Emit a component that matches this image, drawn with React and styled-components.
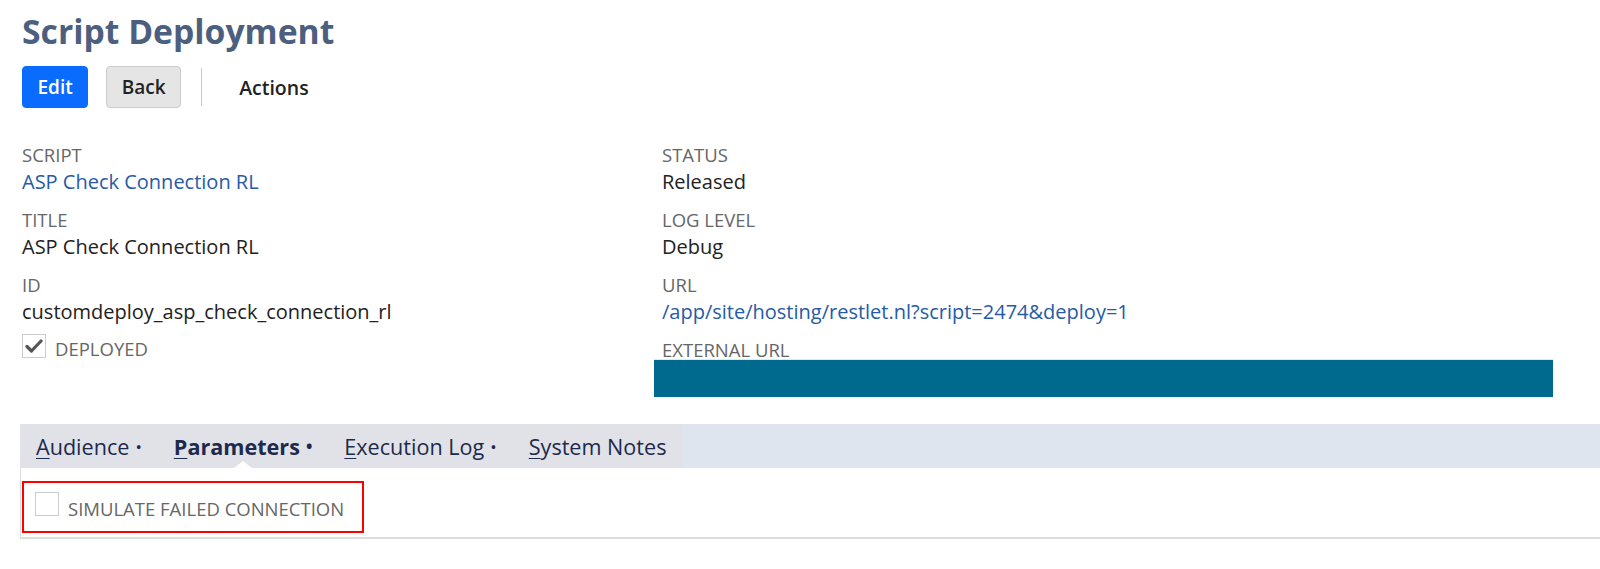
import React from 'react';
import styled, { createGlobalStyle } from 'styled-components';

const GlobalStyle = createGlobalStyle`
    body {
        margin: 0;
        background: #ffffff;
        font-family: "Open Sans", "Liberation Sans", sans-serif;
        color: #222222;
    }
`

const Page = styled.div`
    width: 1600px;
    padding-top: 11px;
`

const Header = styled.div`
    padding-left: 22px;
`

const Title = styled.h1`
    margin: 0;
    font-size: 33.7px;
    line-height: 40px;
    font-weight: 700;
    color: #4d5f7e;
`

const Toolbar = styled.div`
    display: flex;
    align-items: center;
    margin-top: 15px;
    height: 42px;
`

const Button = styled.button`
    height: 42px;
    padding: 0 14.5px;
    font-family: inherit;
    font-size: 19px;
    font-weight: 600;
    border-radius: 4px;
    margin-right: 18px;
    background-color: ${props => props.primary ? '#0a6cff' : '#e5e5e5'};
    color: ${props => props.primary ? '#ffffff' : '#222222'};
    border: 1px solid ${props => props.primary ? '#0a6cff' : '#cccccc'};
`

const Divider = styled.div`
    width: 1px;
    height: 38px;
    background: #c8c8c8;
    margin: 0 37px 0 2px;
`

const ActionsLabel = styled.span`
    font-size: 19.5px;
    font-weight: 600;
    color: #222222;
`

const Fields = styled.div`
    display: grid;
    grid-template-columns: 640px 1fr;
    margin-top: 35px;
    padding-left: 22px;
`

const Column = styled.div`
    display: flex;
    flex-direction: column;
`

const Field = styled.div`
    display: flex;
    flex-direction: column;
    gap: 1px;
    margin-bottom: 12px;
`

const Label = styled.div`
    font-size: 18.5px;
    line-height: 24px;
    color: #666666;
    text-transform: uppercase;
`

const Value = styled.div`
    font-size: 20px;
    line-height: 28px;
    color: ${props => props.link ? '#255ba7' : '#222222'};
`

const CheckRow = styled.div`
    display: flex;
    align-items: flex-start;
    gap: 9px;
    margin-top: -4px;
`

const CheckBox = styled.div`
    width: 24px;
    height: 24px;
    box-sizing: border-box;
    border: 1px solid #cccccc;
    display: flex;
    align-items: center;
    justify-content: center;
    background: #ffffff;
    flex-shrink: 0;
`

const CheckLabel = styled.span`
    font-size: 18.5px;
    line-height: 24px;
    color: #666666;
    text-transform: uppercase;
    margin-top: ${props => props.offset || 5}px;
`

const ExternalBar = styled.div`
    width: 899px;
    height: 37px;
    margin-left: -8px;
    margin-top: -3px;
    background: #006a8e;
    border-top: 1px solid #e6e6e6;
`

const Tabs = styled.div`
    display: flex;
    margin-top: 27px;
    margin-left: 20px;
    height: 44px;
    background: #dfe5ee;
`

const TabGroup = styled.div`
    display: flex;
    background: #e1e2e7;
`

const Tab = styled.div`
    position: relative;
    display: flex;
    align-items: center;
    padding: 0 16px;
    font-size: 21.6px;
    color: #1d2a4d;
    font-weight: ${props => props.active ? 700 : 400};

    u {
        text-decoration-thickness: 1px;
        text-underline-offset: 3px;
    }

    &::after {
        content: '';
        display: ${props => props.active ? 'block' : 'none'};
        position: absolute;
        bottom: 0;
        left: 50%;
        margin-left: -9px;
        border-left: 9px solid transparent;
        border-right: 9px solid transparent;
        border-bottom: 7px solid #ffffff;
    }
`

const Bullet = styled.span`
    margin-left: 6px;
    font-size: 17px;
`

const TabPanel = styled.div`
    margin-left: 20px;
    height: 71px;
    padding-top: 13px;
    box-sizing: border-box;
    border-left: 1px solid #dddddd;
    border-bottom: 2px solid #dddddd;
`

const Highlight = styled.div`
    width: 342px;
    height: 52px;
    box-sizing: border-box;
    margin-left: 1px;
    border: 2px solid #ff0000;
    display: flex;
    align-items: flex-start;
    padding: 9px 0 0 11px;
    gap: 9px;
`

const Check = () => (
    <svg width="18" height="16" viewBox="0 0 18 16">
        <path d="M2 8.5 L6.5 13 L16 3" fill="none" stroke="#555555" strokeWidth="3.2" strokeLinecap="round" strokeLinejoin="round" />
    </svg>
)

const tabs = [
    { key: 'A', rest: 'udience', bullet: true },
    { key: 'P', rest: 'arameters', bullet: true, active: true },
    { key: 'E', rest: 'xecution Log', bullet: true },
    { key: 'S', rest: 'ystem Notes' },
]

export default function App() {
    return (
        <Page>
            <GlobalStyle />
            <Header>
                <Title>Script Deployment</Title>
                <Toolbar>
                    <Button primary>Edit</Button>
                    <Button>Back</Button>
                    <Divider />
                    <ActionsLabel>Actions</ActionsLabel>
                </Toolbar>
            </Header>

            <Fields>
                <Column>
                    <Field>
                        <Label>Script</Label>
                        <Value link>ASP Check Connection RL</Value>
                    </Field>
                    <Field>
                        <Label>Title</Label>
                        <Value>ASP Check Connection RL</Value>
                    </Field>
                    <Field>
                        <Label>ID</Label>
                        <Value>customdeploy_asp_check_connection_rl</Value>
                    </Field>
                    <CheckRow>
                        <CheckBox><Check /></CheckBox>
                        <CheckLabel offset={3}>Deployed</CheckLabel>
                    </CheckRow>
                </Column>
                <Column>
                    <Field>
                        <Label>Status</Label>
                        <Value>Released</Value>
                    </Field>
                    <Field>
                        <Label>Log Level</Label>
                        <Value>Debug</Value>
                    </Field>
                    <Field>
                        <Label>URL</Label>
                        <Value link>/app/site/hosting/restlet.nl?script=2474&amp;deploy=1</Value>
                    </Field>
                    <Label>External URL</Label>
                    <ExternalBar />
                </Column>
            </Fields>

            <Tabs>
                <TabGroup>
                    {tabs.map(t => (
                        <Tab key={t.key} active={t.active}>
                            <span><u>{t.key}</u>{t.rest}</span>
                            {t.bullet && <Bullet>•</Bullet>}
                        </Tab>
                    ))}
                </TabGroup>
            </Tabs>
            <TabPanel>
                <Highlight>
                    <CheckBox />
                    <CheckLabel>Simulate Failed Connection</CheckLabel>
                </Highlight>
            </TabPanel>
        </Page>
    );
}
